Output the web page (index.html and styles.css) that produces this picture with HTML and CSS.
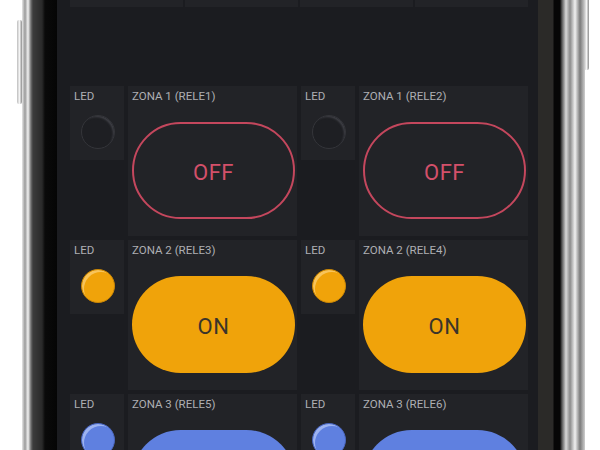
FILE: index.html
```html
<!DOCTYPE html>
<html>
<head>
<meta charset="utf-8"/>
<title>Blynk - Zonas</title>
<link rel="stylesheet" href="styles.css">
</head>
<body>
<div class="phone">
  <div class="side-button left"></div>
  <div class="side-button right"></div>

  <div class="screen">
    <div class="top-strip">
      <div class="strip-tile"></div>
      <div class="strip-tile"></div>
      <div class="strip-tile"></div>
      <div class="strip-tile"></div>
    </div>

    <div class="widgets">
      <!-- zona 1 -->
      <div class="tile led-tile">
        <span class="label">LED</span>
        <div class="led"></div>
      </div>
      <div class="tile zone-tile">
        <span class="label">ZONA 1 (RELE1)</span>
        <div class="switch off">OFF</div>
      </div>
      <div class="tile led-tile">
        <span class="label">LED</span>
        <div class="led"></div>
      </div>
      <div class="tile zone-tile">
        <span class="label">ZONA 1 (RELE2)</span>
        <div class="switch off">OFF</div>
      </div>

      <!-- zona 2 -->
      <div class="tile led-tile">
        <span class="label">LED</span>
        <div class="led orange"></div>
      </div>
      <div class="tile zone-tile">
        <span class="label">ZONA 2 (RELE3)</span>
        <div class="switch orange">ON</div>
      </div>
      <div class="tile led-tile">
        <span class="label">LED</span>
        <div class="led orange"></div>
      </div>
      <div class="tile zone-tile">
        <span class="label">ZONA 2 (RELE4)</span>
        <div class="switch orange">ON</div>
      </div>

      <!-- zona 3 (scrolled, button text below the fold) -->
      <div class="tile led-tile">
        <span class="label">LED</span>
        <div class="led blue"></div>
      </div>
      <div class="tile zone-tile">
        <span class="label">ZONA 3 (RELE5)</span>
        <div class="switch blue"></div>
      </div>
      <div class="tile led-tile">
        <span class="label">LED</span>
        <div class="led blue"></div>
      </div>
      <div class="tile zone-tile">
        <span class="label">ZONA 3 (RELE6)</span>
        <div class="switch blue"></div>
      </div>
    </div>
  </div>
</div>
</body>
</html>
```

FILE: styles.css
```css
html, body {
   margin: 0;
   padding: 0;
   background-color: white;
}

body {
   width: 600px;
   height: 450px;
   overflow: hidden;
   font-family: Roboto, "Liberation Sans", sans-serif;
}

.phone {
   position: relative;
   display: flex;
   margin-left: 22px;
   width: 563px;
   height: 450px;
   padding-left: 35px;
   padding-right: 47px;
   box-sizing: border-box;
   background: linear-gradient(to right,
      #e6e6e6 0px, #9a9a9a 3px, #f2f2f2 6px, #6d6d6d 9px,
      #3c3c3c 11px, #2a2a2a 20px, #0a0a0a 23px, #050505 35px,
      #2b2a28 516px, #2b2a28 531px, #060606 532px, #060606 538px,
      #5a5a5a 540px, #d8d8d8 544px, #8a8a8a 548px, #f0f0f0 553px,
      #7a7a7a 558px, #cfcfcf 563px);
}

.side-button {
   position: absolute;
   width: 5px;
   background: linear-gradient(to right, #bdbdbd, #f4f4f4, #8c8c8c);
   border-radius: 2px;
}

.side-button.left {
   left: -5px;
   top: 20px;
   height: 84px;
}

.side-button.right {
   right: -4px;
   top: -4px;
   height: 74px;
}

.screen {
   flex: 1;
   height: 450px;
   overflow: hidden;
   background-color: #1b1c20;
   padding: 0 10px 0 13px;
}

.top-strip {
   display: grid;
   grid-template-columns: repeat(4, 1fr);
   column-gap: 2px;
   height: 7px;
}

.strip-tile {
   background-color: #222327;
}

.widgets {
   display: grid;
   grid-template-columns: 54px 169px 54px 169px;
   grid-auto-rows: 150px;
   gap: 4px;
   margin-top: 79px;
}

.tile {
   background-color: #222327;
   display: flex;
   flex-direction: column;
   align-items: center;
}

.label {
   align-self: flex-start;
   color: #aeafb3;
   font-size: 11.5px;
   line-height: 12px;
   padding: 4px 0 0 4px;
}

.led-tile {
   height: 74px;
}

.led {
   width: 34px;
   height: 34px;
   margin-top: 13px;
   margin-left: 2px;
   border-radius: 50%;
   box-sizing: border-box;
   background-color: #1e1f23;
   border: 1px solid #34353a;
   box-shadow: inset -2px 2px 2px -1px #404147;
}

.led.orange {
   background-color: #f0a30a;
   border-color: #c98606;
   box-shadow: inset 3px 3px 0 -1px #f8c45a;
}

.led.blue {
   background-color: #5f80e0;
   border-color: #4a66bd;
   box-shadow: inset 3px 3px 0 -1px #9db3f0;
}

.switch {
   width: 163px;
   height: 97px;
   margin-top: 20px;
   margin-left: 2px;
   padding-top: 4px;
   box-sizing: border-box;
   border-radius: 49px;
   display: flex;
   align-items: center;
   justify-content: center;
   font-size: 22px;
   letter-spacing: 0.5px;
}

.switch.off {
   border: 2px solid #c4475d;
   color: #d3506a;
}

.switch.orange {
   background-color: #f0a30a;
   color: #3a342a;
}

.switch.blue {
   background-color: #5f80e0;
   color: #26304a;
}
```
